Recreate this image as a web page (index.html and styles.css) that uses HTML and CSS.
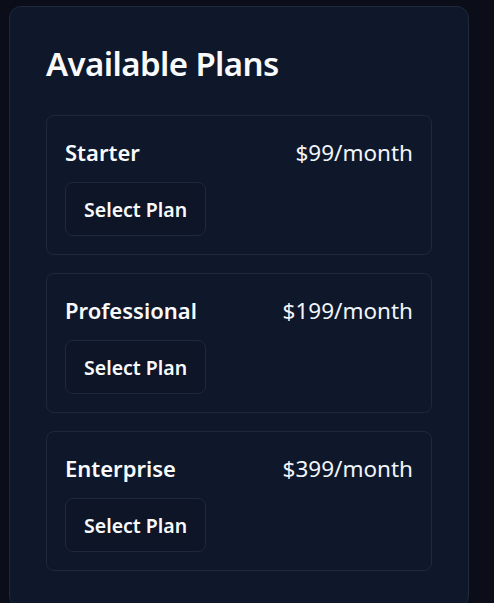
FILE: index.html
```html
<!DOCTYPE html>
<html lang="en">
<head>
<meta charset="utf-8">
<title>Available Plans</title>
<link rel="stylesheet" href="styles.css">
</head>
<body>
<section class="card">
  <h1 class="title">Available Plans</h1>
  <div class="plans">
    <div class="plan">
      <div class="plan-head">
        <span class="plan-name">Starter</span>
        <span class="plan-price">$99/month</span>
      </div>
      <button class="btn">Select Plan</button>
    </div>
    <div class="plan">
      <div class="plan-head">
        <span class="plan-name">Professional</span>
        <span class="plan-price">$199/month</span>
      </div>
      <button class="btn">Select Plan</button>
    </div>
    <div class="plan">
      <div class="plan-head">
        <span class="plan-name">Enterprise</span>
        <span class="plan-price">$399/month</span>
      </div>
      <button class="btn">Select Plan</button>
    </div>
  </div>
</section>
</body>
</html>
```
FILE: styles.css
```css
html, body {
  margin: 0;
  background: #0b0e18;
}
body {
  padding: 6px 0 0 9px;
  font-family: "Noto Sans", "Open Sans", sans-serif;
  color: #f8fafc;
}
.card {
  box-sizing: border-box;
  width: 460px;
  background: #0f172a;
  border: 1px solid #1e293b;
  border-radius: 12px;
  padding: 36px 36px 36px 36px;
}
.title {
  margin: 0 0 30px 0;
  font-size: 33px;
  line-height: 42px;
  font-weight: 600;
  letter-spacing: -0.6px;
}
.plans {
  display: flex;
  flex-direction: column;
  gap: 18px;
}
.plan {
  border: 1px solid #1e293b;
  border-radius: 8px;
  padding: 18px;
  display: flex;
  flex-direction: column;
  align-items: flex-start;
  gap: 12px;
}
.plan-head {
  align-self: stretch;
  display: flex;
  justify-content: space-between;
  align-items: center;
  height: 36px;
}
.plan-name {
  font-size: 22px;
  font-weight: 600;
}
.plan-price {
  font-size: 22.5px;
  font-weight: 400;
  color: #f1f5f9;
}
.btn {
  box-sizing: border-box;
  height: 54px;
  padding: 0 18px;
  background: #0e1526;
  border: 1px solid #1e293b;
  border-radius: 8px;
  color: #f8fafc;
  font-family: inherit;
  font-size: 19.5px;
  font-weight: 600;
}
```
